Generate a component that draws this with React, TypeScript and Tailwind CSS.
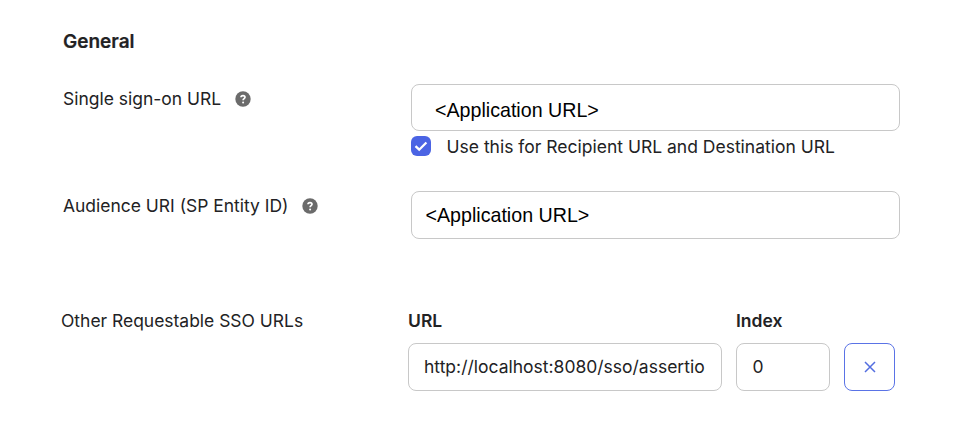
import React from "react";

function Help() {
  return (
    <svg className="h-4 w-4 shrink-0" viewBox="0 0 16 16" fill="none">
      <circle cx="8" cy="8" r="7.7" fill="#6b6b6b" />
      <path d="M6 6.3C6 4 10 4 10 6.3C10 7.8 8.1 7.5 8.1 9.3" stroke="#fff" strokeWidth="1.7" />
      <circle cx="8.1" cy="11.4" r="1" fill="#fff" />
    </svg>
  );
}

function Label({ text, help }: { text: string; help?: boolean }) {
  return (
    <div className="flex h-6 items-center gap-[13.5px] whitespace-nowrap text-[17.47px]">
      <span>{text}</span>
      {help && <Help />}
    </div>
  );
}

export default function App() {
  return (
    <main className="h-[445px] w-[975px] overflow-hidden bg-white pl-[63px] pt-[28px] font-['Inter',sans-serif] text-[#222224]">
      <h1 className="h-[26px] pt-px text-[19px] leading-[26px] font-semibold [-webkit-text-stroke:0.2px_#222224]">General</h1>
      <section className="mt-[29px] flex h-[108px]">
        <div className="w-[348px] pt-1"><Label text="Single sign-on URL" help /></div>
        <div className="pt-px">
          <div className="flex h-[47px] w-[489px] items-center rounded-lg border border-[#c8c8c8] pt-[7px] pl-[23px] font-['Liberation_Sans',sans-serif] text-[19.65px] text-black">{"<Application URL>"}</div>
          <div className="mt-[3px] flex h-6 items-center gap-[15px] whitespace-nowrap text-[17.5px]">
            <span className="flex h-5 w-5 items-center justify-center rounded-[6px] bg-[#4b64e4]">
              <svg className="h-3.5 w-3.5" viewBox="0 0 14 14" fill="none"><path d="M1.5 7.2L5.2 10.7L12.4 3.5" stroke="white" strokeWidth="2.3" /></svg>
            </span>
            <span className="pt-[2px] pl-[0.5px]">Use this for Recipient URL and Destination URL</span>
          </div>
        </div>
      </section>
      <section className="flex h-[118px]">
        <div className="w-[348px] pt-[3px]"><Label text="Audience URI (SP Entity ID)" help /></div>
        <div className="flex h-12 w-[489px] items-center rounded-lg border border-[#c8c8c8] pt-[2px] pl-[13.5px] font-['Liberation_Sans',sans-serif] text-[19.65px] text-black">{"<Application URL>"}</div>
      </section>
      <section className="-ml-0.5 flex">
        <div className="w-[347px]"><Label text="Other Requestable SSO URLs" /></div>
        <div className="w-[314px]">
          <div className="h-6 text-[17.5px] leading-6 font-semibold">URL</div>
          <div className="mt-[10px] flex h-12 items-center rounded-lg border border-[#c8c8c8] px-[15px] text-[17.5px] whitespace-nowrap">http://localhost:8080/sso/assertio</div>
        </div>
        <div className="ml-[14px] w-[94px]">
          <div className="h-6 text-[17.5px] leading-6 font-semibold">Index</div>
          <div className="mt-[10px] flex h-12 items-center rounded-lg border border-[#c8c8c8] pl-[15.5px] text-[17.5px]">0</div>
        </div>
        <button aria-label="Remove URL" className="mt-[34px] ml-[14px] flex h-12 w-[51px] items-center justify-center rounded-lg border border-[#5a73e6]">
          <svg className="h-3 w-3" viewBox="0 0 12 12"><path d="M1 1L11 11M11 1L1 11" stroke="#546ee0" strokeWidth="1.5" /></svg>
        </button>
      </section>
    </main>
  );
}
